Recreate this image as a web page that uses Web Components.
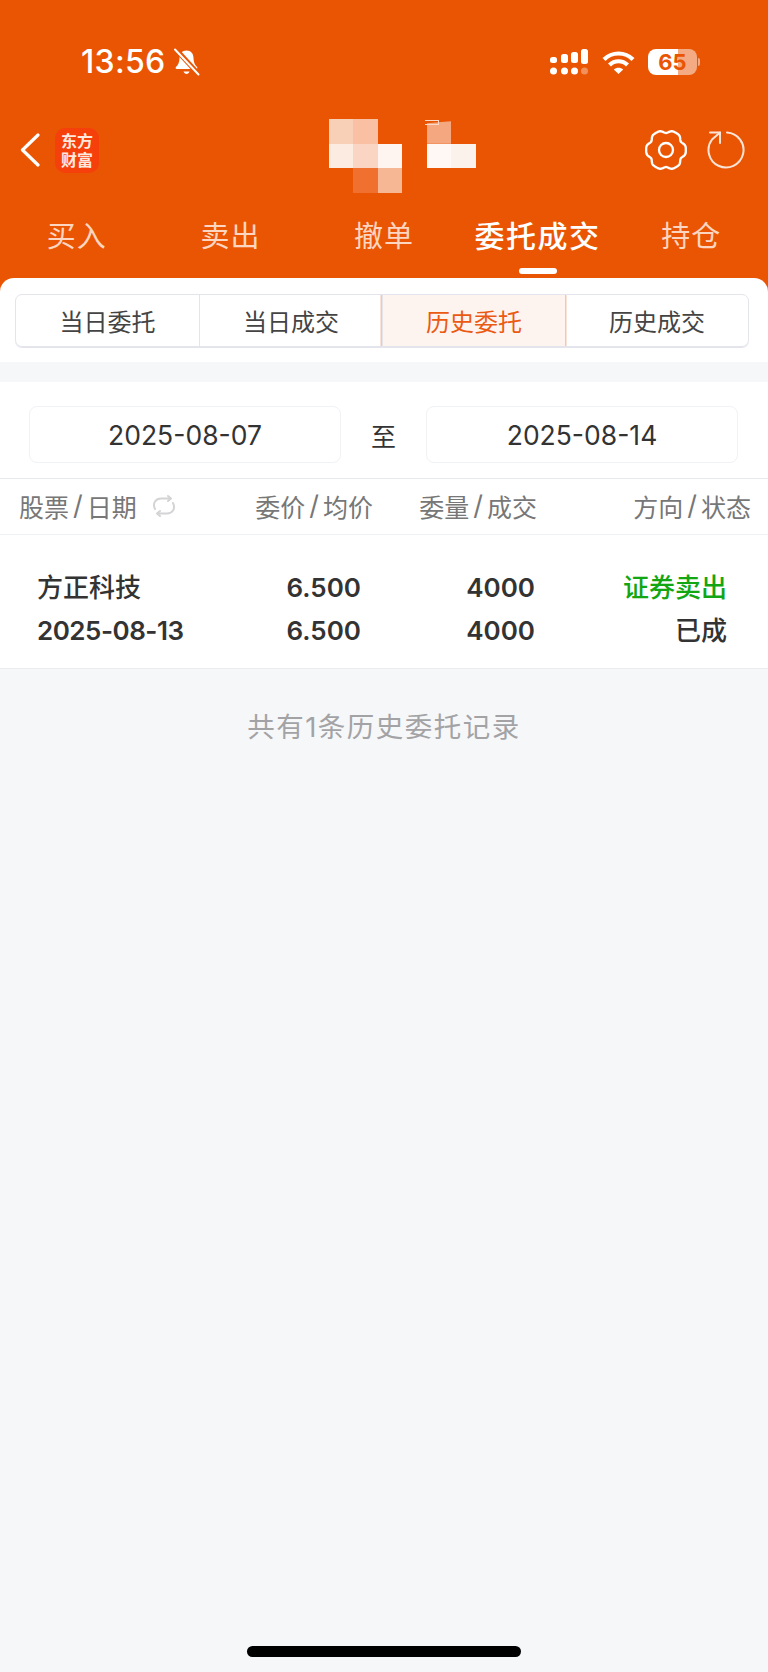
<!DOCTYPE html>
<html lang="zh">
<head>
<meta charset="utf-8">
<title>委托成交</title>
<style>
  html, body { margin: 0; padding: 0; background: #f6f7f9; }
  body { width: 768px; height: 1672px; overflow: hidden; font-family: Inter, "Noto Sans CJK SC", sans-serif; display: flex; flex-direction: column; }
</style>
</head>
<body>
<trade-header></trade-header>
<seg-tabs></seg-tabs>
<date-range from="2025-08-07" to="2025-08-14"></date-range>
<order-table></order-table>
<list-footer>共有1条历史委托记录</list-footer>
<home-bar></home-bar>

<script>
function gearPoints() {
  const pts = [];
  for (let i = 0; i < 180; i++) {
    const a = i / 180 * Math.PI * 2;
    const r = 18.9 + 1.4 * (Math.cos(6 * a) - 0.35 * Math.cos(12 * a));
    pts.push((22 + r * Math.cos(a)).toFixed(2) + ',' + (21 + r * Math.sin(a)).toFixed(2));
  }
  return pts.join(' ');
}

class TradeHeader extends HTMLElement {
  connectedCallback() {
    this.attachShadow({ mode: 'open' });
    this.shadowRoot.innerHTML = `
      <style>
        :host { display: block; background: #ea5504; color: #fff; height: 278px; flex: none; }
        .status { height: 124px; display: flex; align-items: center; }
        .time { margin-left: 81px; font-size: 32px; font-weight: 500; line-height: 40px; letter-spacing: 0.3px; }
        .bell { margin-left: 8px; }
        .signal { margin-left: auto; }
        .wifi { margin-left: 14px; }
        .battery { margin-left: 13px; margin-right: 71px; position: relative; width: 49px; height: 26px; border-radius: 8px;
          background: linear-gradient(to right, #fff 0, #fff 30px, #f4ab84 30px);
          color: #ea5504; font-size: 22px; font-weight: 700; line-height: 26px; text-align: center; }
        .battery::after { content: ''; position: absolute; left: 50px; top: 9px; width: 2px; height: 8px; border-radius: 0 2px 2px 0; background: #f4ab84; }
        .title { height: 52px; display: flex; align-items: center; }
        .back { margin-left: 20px; }
        .logo { margin-left: 15px; width: 44px; height: 45px; border-radius: 10px; background: #f5400c; color: #ffe9df;
          font-family: "Noto Sans CJK SC", sans-serif; font-weight: 700; font-size: 16px; line-height: 19px; text-align: center;
          display: flex; align-items: center; justify-content: center; }
        .mosaic { margin-left: 229.5px; margin-top: 12px; display: grid; grid-template-columns: repeat(6, 24.5px); grid-auto-rows: 24.5px; position: relative; }
        .hook { position: absolute; left: 96px; top: 1px; width: 13px; height: 3px; border: 1.5px solid #fbd9c6; border-left: 0; }
        .gear { margin-left: auto; }
        .refresh { margin-left: 18px; margin-right: 22px; }
        nav { display: grid; grid-template-columns: repeat(5, 1fr); padding-top: 38px; }
        nav div { position: relative; text-align: center; font-size: 29px; line-height: 40px; color: #fcd6c0; letter-spacing: 1px; font-family: "Noto Sans CJK SC", sans-serif; font-weight: 400; }
        nav div.on { color: #fff; font-weight: 500; font-size: 30px; letter-spacing: 1.5px; }
        nav div.on::after { content: ''; position: absolute; left: 50%; margin-left: -19px; top: 54px; width: 38px; height: 6px; border-radius: 3px; background: #fff; }
      </style>
      <div class="status">
        <span class="time">13:56</span>
        <svg class="bell" width="27" height="28" viewBox="0 0 27 28">
          <path d="M13.5 2.5c-4.6 0-7 3.4-7 7.4 0 4.5-1.5 7-3.6 9.2-.7.8-.2 1.9.8 1.9h19.6c1 0 1.5-1.1.8-1.9-2.1-2.2-3.6-4.7-3.6-9.2 0-4-2.4-7.400-7-7.400z" fill="#fff"/>
          <path d="M10.500 23.500c.6 1.600 1.600 2.500 3 2.500s2.400-.9 3-2.500z" fill="#fff"/>
          <path d="M3 1.500L25.500 26" stroke="#ea5504" stroke-width="5"/>
          <path d="M2 1.500L25.500 26.500" stroke="#fff" stroke-width="2" stroke-linecap="round"/>
        </svg>
        <svg class="signal" width="38" height="26" viewBox="0 0 38 26" fill="#fff">
          <rect x="0" y="8" width="7" height="6" rx="2.500"/>
          <rect x="11" y="5" width="7" height="9" rx="2.500"/>
          <rect x="21" y="3" width="7" height="11" rx="2.500"/>
          <rect x="31" y="0" width="7" height="15" rx="2.500"/>
          <circle cx="3.500" cy="22" r="3.500"/>
          <circle cx="14.500" cy="22" r="3.500"/>
          <circle cx="24.500" cy="22" r="3.500"/>
          <circle cx="34.500" cy="22" r="3.500" opacity=".35"/>
        </svg>
        <svg class="wifi" width="33" height="25" viewBox="0 0 33 25" fill="none" stroke="#fff" stroke-width="4.200">
          <path d="M2 9.500C10 1.500 23 1.500 31 9.500"/>
          <path d="M7.500 15C12.500 10 20.500 10 25.500 15"/>
          <path d="M16.500 24L11.800 19.500C14.500 17.200 18.500 17.200 21.200 19.500Z" fill="#fff" stroke="none"/>
        </svg>
        <div class="battery">65</div>
      </div>
      <div class="title">
        <svg class="back" width="20" height="34" viewBox="0 0 20 34" fill="none" stroke="#fff" stroke-width="3.200" stroke-linecap="round" stroke-linejoin="round"><path d="M18 2L2.500 17L18 32"/></svg>
        <div class="logo"><span>东方<br>财富</span></div>
        <div class="mosaic">
          <i style="background:#f8d0b8"></i><i style="background:#fac0a4"></i><i></i><i></i><i style="background:#f5a880;clip-path:polygon(0 16%,100% 8%,100% 100%,0 100%)"></i><i></i>
          <i style="background:#fcebe0"></i><i style="background:#fad5c4"></i><i style="background:#fff5f0"></i><i></i><i style="background:#fff8f4"></i><i style="background:#fcf2ec"></i>
          <i></i><i style="background:#f07030"></i><i style="background:#f6b795"></i><i></i><i></i><i></i>
          <span class="hook"></span>
        </div>
        <svg class="gear" width="44" height="42" viewBox="0 0 44 42" fill="none" stroke="#fff" stroke-width="2.300">
          <polygon points="${gearPoints()}" stroke-linejoin="round"/>
          <circle cx="22" cy="21" r="7"/>
        </svg>
        <svg class="refresh" width="40" height="40" viewBox="0 0 40 40" fill="none" stroke="#fbe3d6" stroke-width="2" stroke-linecap="round" stroke-linejoin="round">
          <path d="M21 2.500A17.500 17.500 0 1 1 6 9.500L14 2.500"/>
          <path d="M4 2.500H14V13"/>
        </svg>
      </div>
      <nav>
        <div>买入</div><div>卖出</div><div>撤单</div><div class="on">委托成交</div><div>持仓</div>
      </nav>
    `;
  }
}

class SegTabs extends HTMLElement {
  connectedCallback() {
    this.attachShadow({ mode: 'open' });
    this.shadowRoot.innerHTML = `
      <style>
        :host { display: block; background: #ea5504; flex: none; }
        .card { background: #fff; height: 84px; padding: 16px 19px 0 15px; box-sizing: border-box; border-radius: 14px 14px 0 0; }
        .wrap { display: grid; grid-template-columns: repeat(4, 1fr); height: 53px; box-sizing: border-box; border: 1.500px solid #e4e5ec; border-radius: 7px; overflow: hidden; box-shadow: 0 1px 0 #e4e5ec; }
        .wrap div { display: flex; align-items: center; justify-content: center; font-size: 24px; color: #444; border-left: 1.500px solid #e4e5ec; font-family: "Noto Sans CJK SC", sans-serif; }
        .wrap div:first-child { border-left: 0; }
        .wrap div.on { background: #fef4ef; color: #ea5a12; box-shadow: 0 0 0 1.500px #f6c7ae; position: relative; }
      </style>
      <div class="card">
        <div class="wrap">
          <div>当日委托</div><div>当日成交</div><div class="on">历史委托</div><div>历史成交</div>
        </div>
      </div>
    `;
  }
}

class DateRange extends HTMLElement {
  connectedCallback() {
    this.attachShadow({ mode: 'open' });
    this.shadowRoot.innerHTML = `
      <style>
        :host { display: block; flex: none; margin-top: 20px; background: #fff; height: 96.500px; padding: 24px 30px 0 29px; box-sizing: border-box; border-bottom: 1.500px solid #e8e9ec; }
        .row { display: grid; grid-template-columns: 312px 85px 312px; height: 57px; }
        .box { border: 1.500px solid #f1f2f5; border-radius: 8px; display: flex; align-items: center; justify-content: center; font-size: 26.500px; color: #333; }
        .to { display: flex; align-items: center; justify-content: center; font-size: 25px; color: #333; font-family: "Noto Sans CJK SC", sans-serif; }
      </style>
      <div class="row">
        <div class="box">${this.getAttribute('from')}</div>
        <div class="to">至</div>
        <div class="box">${this.getAttribute('to')}</div>
      </div>
    `;
  }
}

class OrderTable extends HTMLElement {
  connectedCallback() {
    this.attachShadow({ mode: 'open' });
    this.shadowRoot.innerHTML = `
      <style>
        :host { display: block; flex: none; background: #fff; font-family: Inter, "Noto Sans CJK SC", sans-serif; }
        .head { height: 56.500px; box-sizing: border-box; border-bottom: 1.500px solid #f0f1f3; display: grid; grid-template-columns: 217px 137px 164px 214px; padding-left: 19px; align-items: center; font-size: 25px; color: #777; font-family: "Noto Sans CJK SC", sans-serif; }
        .head > div { display: flex; align-items: center; justify-content: flex-end; }
        .head > div:first-child { justify-content: flex-start; }
        .head b { font-weight: 400; font-family: Inter, sans-serif; margin: 0 4px; font-size: 27px; line-height: 24px; }
        .head svg { margin-left: 14px; }
        .row { height: 134px; box-sizing: border-box; border-bottom: 1.500px solid #ececef; padding: 31px 0 0 37px; display: grid; grid-template-columns: 203px 121px 174px 192px; grid-auto-rows: 43px; font-size: 26px; font-weight: 600; color: #333; align-items: center; }
        .row span { text-align: right; }
        .row span:first-child, .row .d { text-align: left; }
        .row .d { letter-spacing: -0.5px; }
        .cn { font-family: "Noto Sans CJK SC", sans-serif; font-weight: 500; margin-bottom: 5px; }
        .sell { color: #12a612; }
      </style>
      <div class="head">
        <div>股票<b>/</b>日期
          <svg width="26" height="24" viewBox="0 0 26 24" fill="none" stroke="#d4d4d6" stroke-width="2" stroke-linecap="round" stroke-linejoin="round">
            <path d="M4 15C1 9 5 4.500 10 4.500H19"/><path d="M22 9C25 15 21 19.500 16 19.500H7"/><path d="M17 2L20 4.500L17 7"/><path d="M9 17L6 19.500L9 22"/>
          </svg>
        </div>
        <div>委价<b>/</b>均价</div>
        <div>委量<b>/</b>成交</div>
        <div>方向<b>/</b>状态</div>
      </div>
      <div class="row">
        <span class="cn">方正科技</span><span>6.500</span><span>4000</span><span class="cn sell">证券卖出</span>
        <span class="d">2025-08-13</span><span>6.500</span><span>4000</span><span class="cn">已成</span>
      </div>
    `;
  }
}

class ListFooter extends HTMLElement {
  connectedCallback() {
    this.attachShadow({ mode: 'open' });
    this.shadowRoot.innerHTML = `
      <style>
        :host { display: block; flex: none; padding-top: 38px; text-align: center; font-size: 27.500px; letter-spacing: 1.500px; line-height: 40px; color: #a3a3a5; font-family: Inter, "Noto Sans CJK SC", sans-serif; }
      </style>
      <slot></slot>
    `;
  }
}

class HomeBar extends HTMLElement {
  connectedCallback() {
    this.attachShadow({ mode: 'open' });
    this.shadowRoot.innerHTML = `
      <style>
        :host { display: block; margin-top: auto; padding: 0 247px 15px; flex: none; }
        div { height: 11px; border-radius: 6px; background: #000; }
      </style>
      <div></div>
    `;
  }
}

customElements.define('trade-header', TradeHeader);
customElements.define('seg-tabs', SegTabs);
customElements.define('date-range', DateRange);
customElements.define('order-table', OrderTable);
customElements.define('list-footer', ListFooter);
customElements.define('home-bar', HomeBar);
</script>
</body>
</html>
